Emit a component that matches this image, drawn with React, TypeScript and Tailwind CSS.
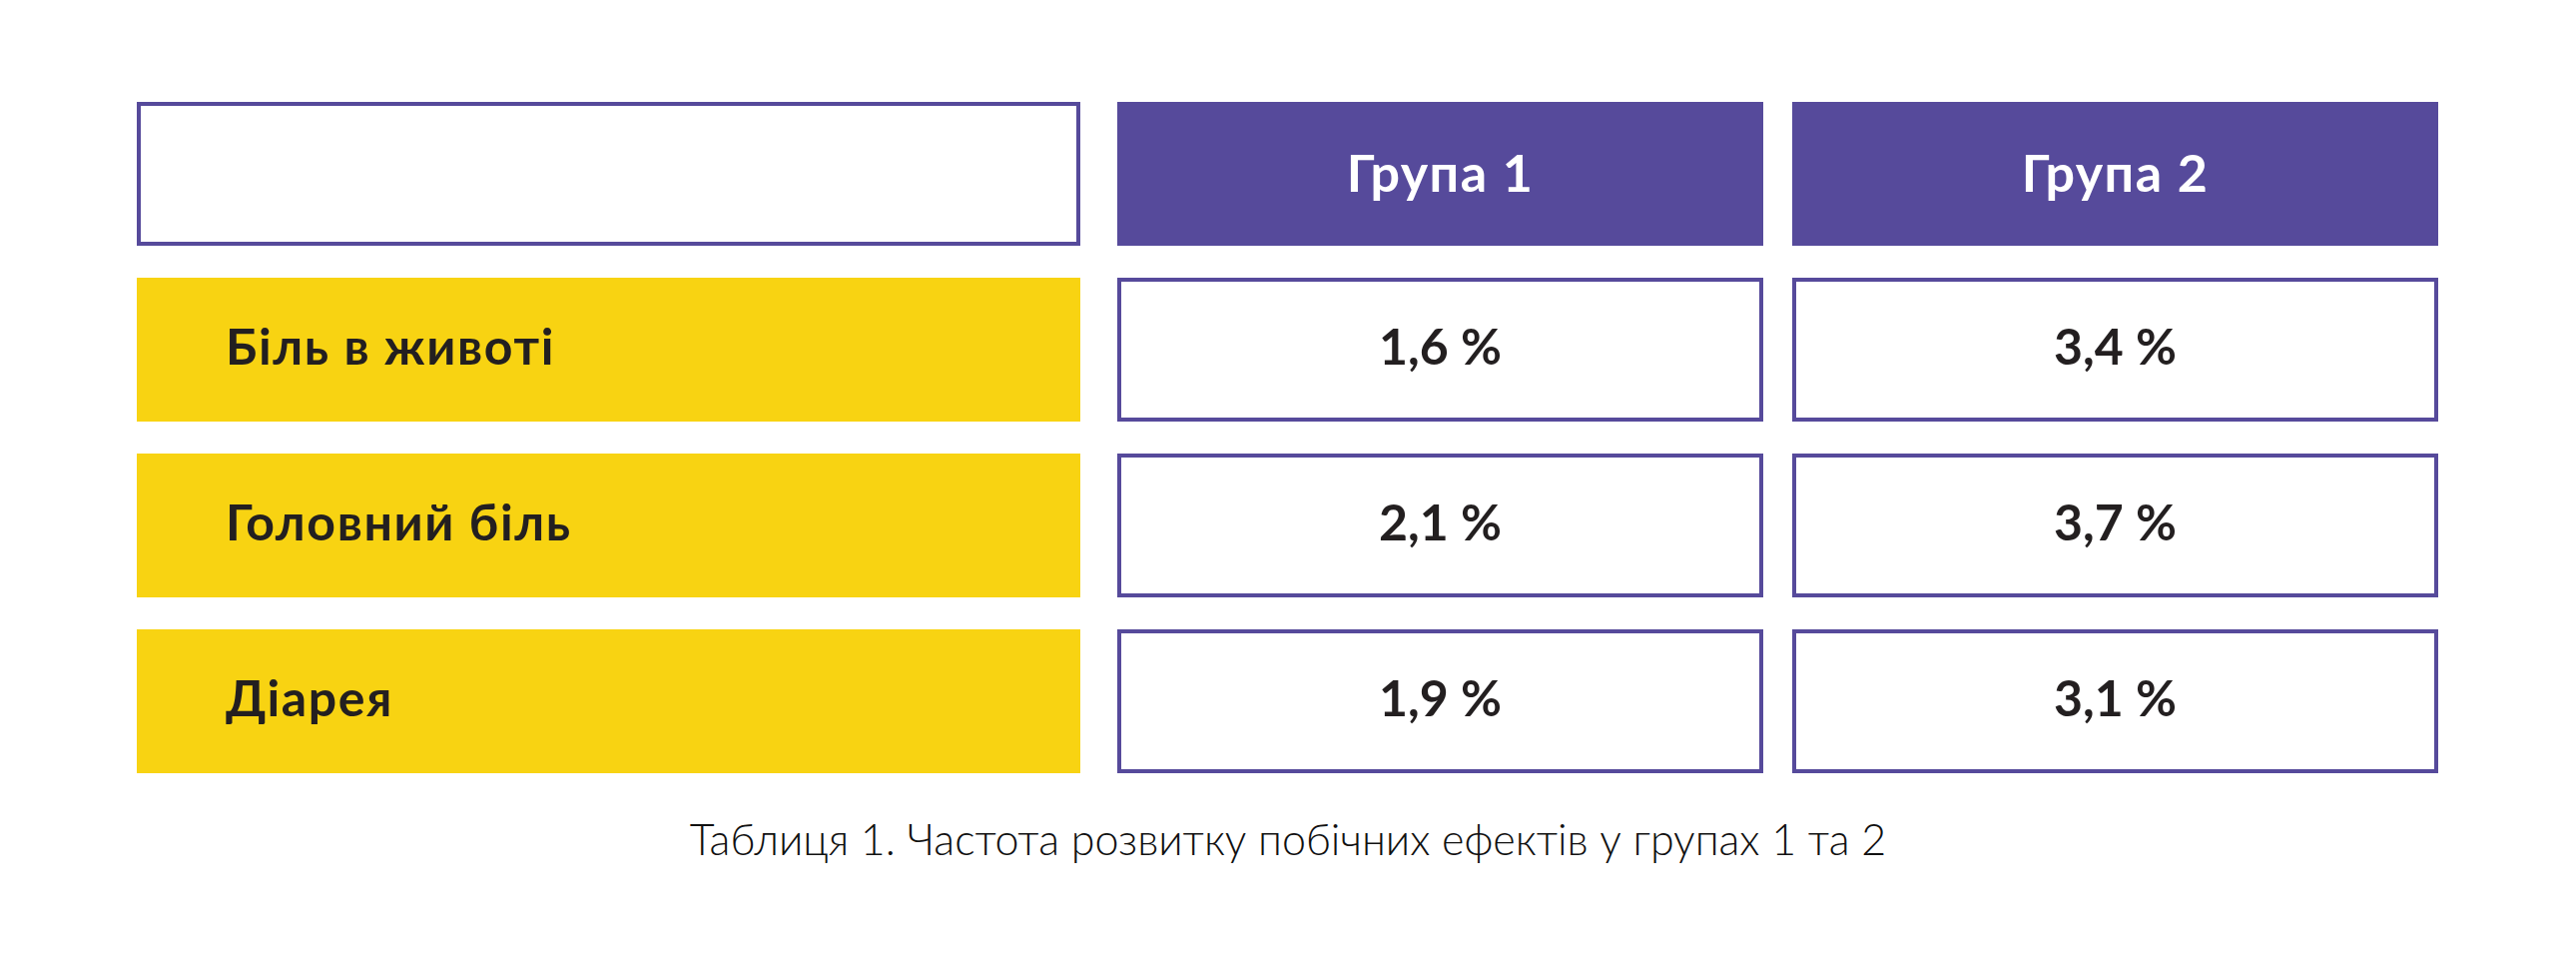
import React from "react";

const rows = [
  { label: "Біль в животі", a: "1,6 %", b: "3,4 %" },
  { label: "Головний біль", a: "2,1 %", b: "3,7 %" },
  { label: "Діарея", a: "1,9 %", b: "3,1 %" },
];

export default function App() {
  return (
    <div className="w-[2580px] h-[967px] bg-white font-['Lato','Open_Sans',sans-serif] text-[#231f20]">
      <div className="pt-[102px] pl-[137px] flex flex-col gap-[32px]">
        <div className="flex h-[144px]">
          <div className="w-[945px] h-full border-[4px] border-[#564a9b] bg-white" />
          <div className="ml-[37px] w-[647px] h-full bg-[#564a9b] flex items-center justify-center pb-[4px]">
            <span className="text-white font-bold text-[52px] leading-none tracking-[1.5px]">Група 1</span>
          </div>
          <div className="ml-[29px] w-[647px] h-full bg-[#564a9b] flex items-center justify-center pb-[4px]">
            <span className="text-white font-bold text-[52px] leading-none tracking-[1.5px]">Група 2</span>
          </div>
        </div>
        {rows.map((r) => (
          <div key={r.label} className="flex h-[144px]">
            <div className="w-[945px] h-full bg-[#f8d312] flex items-center pl-[89px] pb-[8px]">
              <span className="font-bold text-[50px] leading-none tracking-[1.6px]">{r.label}</span>
            </div>
            <div className="ml-[37px] w-[647px] h-full border-[4px] border-[#564a9b] flex items-center justify-center pb-[8px]">
              <span className="font-bold text-[50px] leading-none">{r.a}</span>
            </div>
            <div className="ml-[29px] w-[647px] h-full border-[4px] border-[#564a9b] flex items-center justify-center pb-[8px]">
              <span className="font-bold text-[50px] leading-none">{r.b}</span>
            </div>
          </div>
        ))}
      </div>
      <div className="mt-[44px] text-center font-light text-[43px] leading-none text-[#111111]">
        Таблиця 1. Частота розвитку побічних ефектів у групах 1 та 2
      </div>
    </div>
  );
}
